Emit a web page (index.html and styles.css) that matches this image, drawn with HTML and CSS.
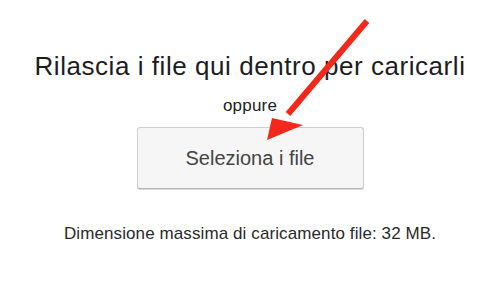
FILE: index.html
```html
<!DOCTYPE html>
<html lang="it">
<head>
<meta charset="utf-8">
<title>Carica file</title>
<link rel="stylesheet" href="styles.css">
</head>
<body>
<main class="uploader">
  <h1 class="drop-title">Rilascia i file qui dentro per caricarli</h1>
  <p class="or">oppure</p>
  <button class="select-btn" type="button">Seleziona i file</button>
  <p class="max-size">Dimensione massima di caricamento file: 32 MB.</p>
</main>
<svg class="arrow" width="500" height="296" viewBox="0 0 500 296" aria-hidden="true">
  <line x1="367" y1="21" x2="288" y2="114" stroke="#f3281b" stroke-width="6" stroke-linecap="butt"/>
  <polygon points="267,140 272,118 303,125" fill="#f3281b"/>
</svg>
</body>
</html>
```
FILE: styles.css
```css
html, body {
  margin: 0;
  padding: 0;
  background: #ffffff;
}
body {
  width: 500px;
  height: 296px;
  position: relative;
  overflow: hidden;
  font-family: "Liberation Sans", Arial, sans-serif;
}
.uploader {
  display: flex;
  flex-direction: column;
  align-items: center;
  padding-top: 51px;
}
.drop-title {
  margin: 0;
  font-size: 26px;
  line-height: 30px;
  letter-spacing: 0.55px;
  font-weight: normal;
  color: #1d1d1f;
  white-space: nowrap;
}
.or {
  margin: 15px 0 0;
  font-size: 17px;
  line-height: 20px;
  letter-spacing: 0.2px;
  color: #222;
}
.select-btn {
  margin-top: 11px;
  width: 227px;
  height: 62px;
  box-sizing: border-box;
  border: 1px solid #cfcfcf;
  border-bottom-color: #b9b9b9;
  border-radius: 3px;
  background: #f6f6f6;
  box-shadow: 0 1px 0 #d6d6d6;
  font-family: "Liberation Sans", Arial, sans-serif;
  font-size: 20px;
  color: #444;
  padding: 0;
}
.max-size {
  margin: 35px 0 0;
  font-size: 17px;
  line-height: 20px;
  letter-spacing: 0.1px;
  color: #2a2a2a;
}
.arrow {
  position: absolute;
  left: 0;
  top: 0;
  pointer-events: none;
}
```
